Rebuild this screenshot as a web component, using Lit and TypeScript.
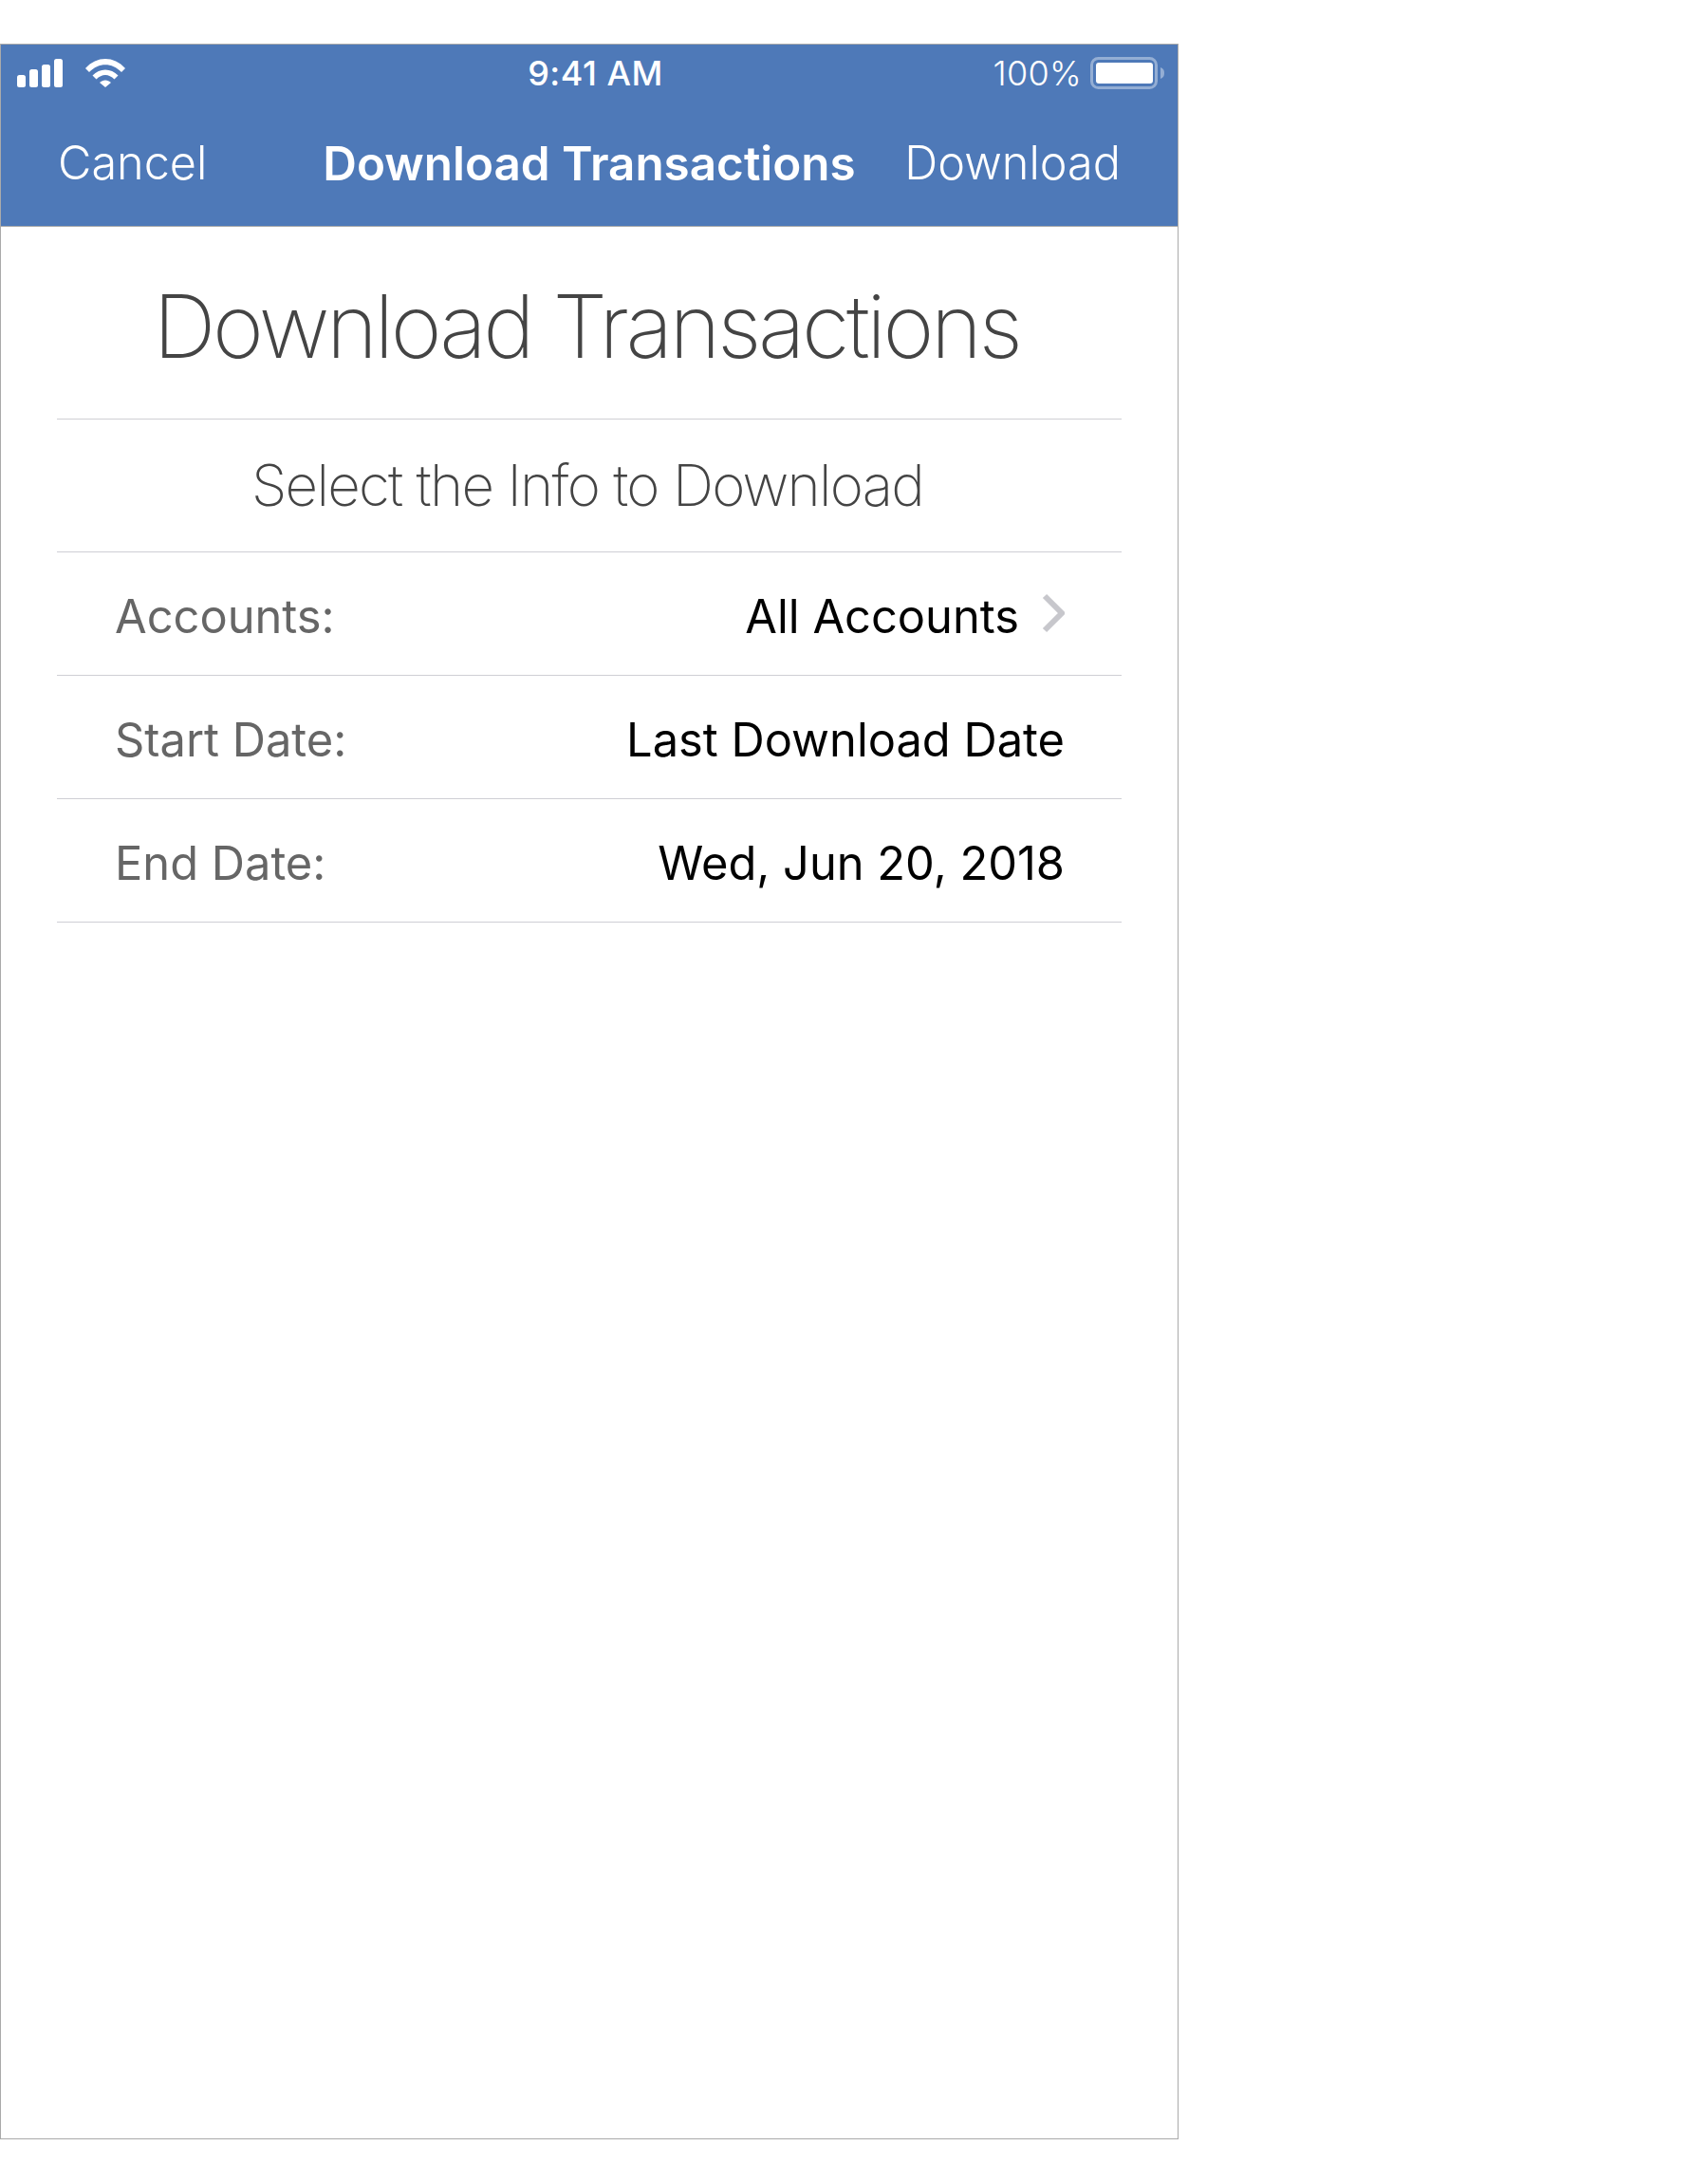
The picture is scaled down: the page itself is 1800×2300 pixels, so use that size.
import { LitElement, html, css } from "lit";
import { customElement } from "lit/decorators.js";

const rows = [
  { label: "Accounts:", value: "All Accounts", chevron: true },
  { label: "Start Date:", value: "Last Download Date", chevron: false },
  { label: "End Date:", value: "Wed, Jun 20, 2018", chevron: false },
];

@customElement("app-root")
export class AppRoot extends LitElement {
  static styles = css`
    :host {
      display: block;
      width: 1800px;
      height: 2300px;
      padding-top: 46px;
      box-sizing: border-box;
      background: #fff;
      font-family: Inter, "Liberation Sans", sans-serif;
    }
    .phone {
      width: 1242px;
      height: 2208px;
      box-sizing: border-box;
      border: 1px solid #aaa;
      border-top: 0;
      display: flex;
      flex-direction: column;
    }
    .top {
      height: 193px;
      box-sizing: border-box;
      background: #4e79b8;
      border: 1px solid #aaa;
      margin: 0 -1px;
      color: #fff;
      display: flex;
      flex-direction: column;
    }
    .status {
      height: 60px;
      display: grid;
      grid-template-columns: 1fr auto 1fr;
      align-items: center;
      padding: 0 14px 0 17px;
      font-size: 36px;
    }
    .status-left {
      display: flex;
      align-items: center;
      gap: 24px;
    }
    .time {
      font-weight: 500;
      padding-left: 10px;
      letter-spacing: 0.5px;
    }
    .status-right {
      display: flex;
      align-items: center;
      justify-content: flex-end;
      gap: 9px;
      font-weight: 300;
      letter-spacing: 0.3px;
    }
    svg {
      display: block;
    }
    .nav {
      flex: 1;
      display: grid;
      grid-template-columns: 1fr auto 1fr;
      align-items: center;
      padding: 0 60px 2px 60px;
      font-size: 48.6px;
      font-weight: 350;
    }
    .nav b {
      font-weight: 600;
      font-size: 49.4px;
    }
    .nav span:last-child {
      text-align: right;
    }
    .content {
      padding: 0 59px;
      display: flex;
      flex-direction: column;
    }
    .title {
      height: 203px;
      box-sizing: border-box;
      padding: 6px 6px 0 0;
      border-bottom: 1px solid #cfcfd4;
      display: flex;
      align-items: center;
      justify-content: center;
      font-size: 92px;
      font-weight: 150;
      letter-spacing: -3.45px;
      color: #444;
    }
    .subtitle {
      height: 140px;
      box-sizing: border-box;
      padding: 0 4px 2px 0;
      border-bottom: 1px solid #cfcfd4;
      display: flex;
      align-items: center;
      justify-content: center;
      font-size: 60px;
      font-weight: 150;
      letter-spacing: -1.73px;
      color: #444;
    }
    .row {
      height: 130px;
      box-sizing: border-box;
      padding: 5px 60px 0 61px;
      border-bottom: 1px solid #cfcfd4;
      display: flex;
      align-items: center;
      justify-content: space-between;
      font-size: 48.8px;
    }
    .label {
      color: #666;
    }
    .value {
      color: #000;
      display: flex;
      align-items: center;
      gap: 24px;
    }
    .chevron {
      margin-top: -6px;
    }
  `;

  render() {
    return html`
      <div class="phone">
        <div class="top">
          <div class="status">
            <div class="status-left">
              <svg width="48" height="30" viewBox="0 0 48 30" fill="#fff">
                <rect x="0" y="17" width="9" height="13" rx="2.5" />
                <rect x="13" y="11" width="9" height="19" rx="2.5" />
                <rect x="26" y="6" width="9" height="24" rx="2.5" />
                <rect x="39" y="0" width="9" height="30" rx="2.5" />
              </svg>
              <svg width="42" height="30" viewBox="0 0 42 30" fill="#fff">
                <path d="M0 10 C12 -3.3 30 -3.3 42 10 L38 14 C28 3.5 14 3.5 4 14 Z" />
                <path d="M7.5 17.500 C15 9.500 27 9.500 34.500 17.500 L30.500 21.500 C24.500 15.500 17.500 15.500 11.500 21.500 Z" />
                <path d="M15 25 C18.500 21.500 23.500 21.500 27 25 L21 30 Z" />
              </svg>
            </div>
            <div class="time">9:41 AM</div>
            <div class="status-right">
              <span>100%</span>
              <svg width="78" height="34" viewBox="0 0 78 34">
                <rect x="1.500" y="1.500" width="68" height="31" rx="7" fill="none" stroke="#fff" stroke-opacity="0.4" stroke-width="3" />
                <rect x="6" y="6" width="60" height="22" rx="3" fill="#fff" />
                <path d="M74 11 C77 12 78 14 78 17 C78 20 77 22 74 23 Z" fill="#fff" fill-opacity="0.4" />
              </svg>
            </div>
          </div>
          <div class="nav">
            <span>Cancel</span>
            <b>Download Transactions</b>
            <span>Download</span>
          </div>
        </div>
        <div class="content">
          <div class="title">Download Transactions</div>
          <div class="subtitle">Select the Info to Download</div>
          ${rows.map(
            (r) => html`
              <div class="row">
                <span class="label">${r.label}</span>
                <span class="value">
                  ${r.value}
                  ${r.chevron
                    ? html`<svg class="chevron" width="24" height="42" viewBox="0 0 24 42" fill="none">
                        <path d="M3 3 L21 21 L3 39" stroke="#c7c7cc" stroke-width="6" />
                      </svg>`
                    : ""}
                </span>
              </div>
            `
          )}
        </div>
      </div>
    `;
  }
}
